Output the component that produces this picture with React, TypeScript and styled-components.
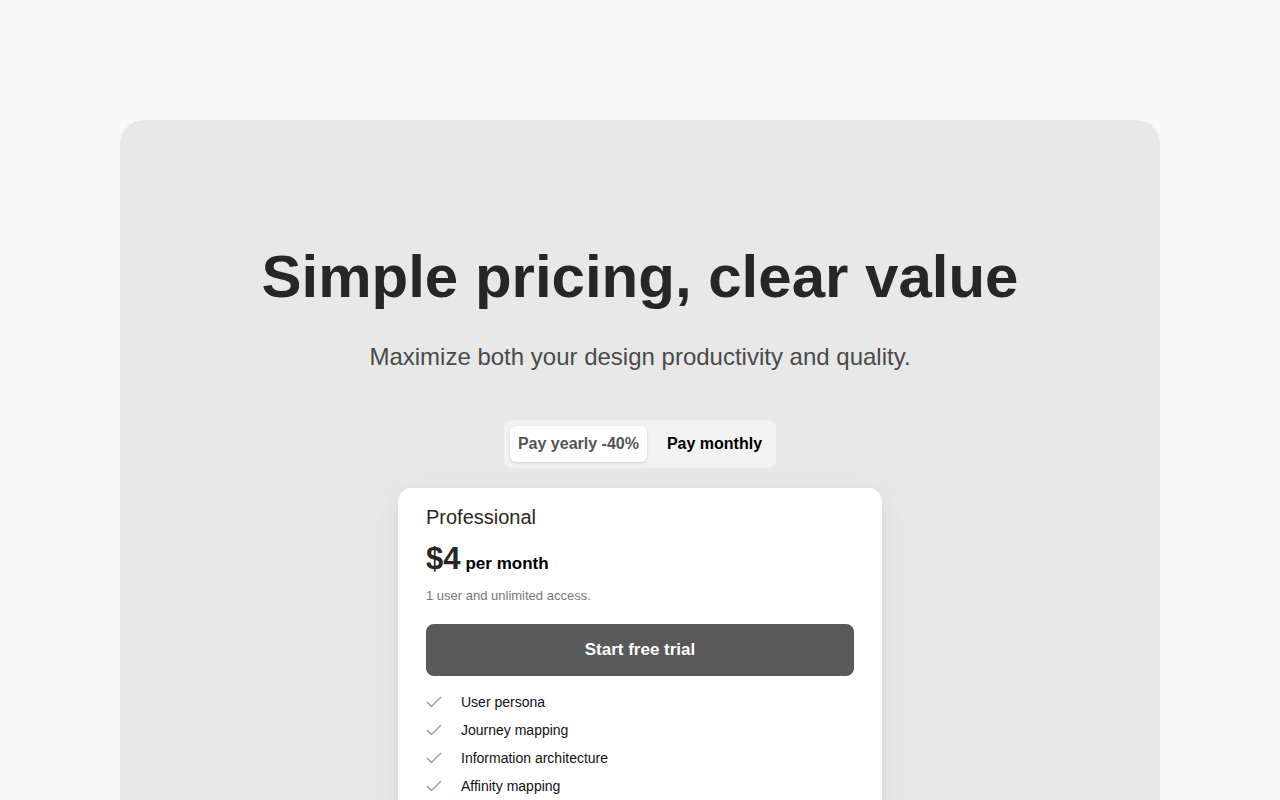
import React, { useState } from 'react';
import styled, { createGlobalStyle } from 'styled-components';

const GlobalStyle = createGlobalStyle`
  html, body {
    margin: 0;
    padding: 0;
    background: #f8f8f8;
    font-family: "Liberation Sans", Arial, Helvetica, sans-serif;
    overflow: hidden;
  }
`;

const Page = styled.div`
  height: 800px;
  padding: 120px 120px 0;
  box-sizing: border-box;
`;

const Panel = styled.section`
  background: #e8e8e8;
  border-radius: 24px;
  height: 760px;
  display: flex;
  flex-direction: column;
  align-items: center;
  padding-top: 122px;
  box-sizing: border-box;
`;

const Title = styled.h1`
  margin: 0;
  font-size: 60px;
  line-height: 70px;
  font-weight: 700;
  color: #262626;
`;

const Subtitle = styled.p`
  margin: 30px 0 0;
  font-size: 24px;
  line-height: 30px;
  color: #4a4a4a;
`;

const Toggle = styled.div`
  margin-top: 48px;
  display: flex;
  gap: 12px;
  padding: 6px;
  background: #f2f2f2;
  border-radius: 8px;
`;

const ToggleButton = styled.button<{ $active: boolean }>`
  border: none;
  font-family: inherit;
  font-size: 16px;
  font-weight: 700;
  height: 36px;
  padding: 0 8px;
  border-radius: 6px;
  cursor: pointer;
  color: ${({ $active }) => ($active ? '#555555' : '#000000')};
  background: ${({ $active }) => ($active ? '#ffffff' : 'transparent')};
  box-shadow: ${({ $active }) => ($active ? '0 1px 3px rgba(0,0,0,0.15)' : 'none')};
`;

const Card = styled.div`
  margin-top: 20px;
  width: 484px;
  box-sizing: border-box;
  background: #ffffff;
  border-radius: 14px;
  padding: 17px 28px 40px;
  box-shadow: 0 6px 24px rgba(0, 0, 0, 0.08);
`;

const PlanName = styled.div`
  font-size: 20px;
  line-height: 24px;
  color: #262626;
`;

const PriceRow = styled.div`
  margin-top: 12px;
  display: flex;
  align-items: baseline;
  gap: 5px;
`;

const Price = styled.span`
  font-size: 31px;
  font-weight: 700;
  color: #262626;
`;

const Period = styled.span`
  font-size: 17px;
  font-weight: 700;
  color: #000;
`;

const Note = styled.div`
  margin-top: 11px;
  font-size: 13px;
  color: #777777;
`;

const CtaButton = styled.button`
  margin-top: 21px;
  width: 100%;
  height: 52px;
  border: none;
  border-radius: 8px;
  background: #595959;
  color: #ffffff;
  font-family: inherit;
  font-size: 17px;
  font-weight: 700;
  cursor: pointer;
`;

const Features = styled.ul`
  list-style: none;
  margin: 16px 0 0;
  padding: 0;
  display: flex;
  flex-direction: column;
  gap: 8px;
`;

const Feature = styled.li`
  display: flex;
  align-items: center;
  gap: 19px;
  font-size: 14px;
  line-height: 20px;
  color: #111;
`;

const Check = () => (
  <svg width="16" height="12" viewBox="0 0 16 12" fill="none">
    <polyline points="1,6 5.5,10.5 15,1" stroke="#9a9a9a" strokeWidth="1.4" />
  </svg>
);

const features = ['User persona', 'Journey mapping', 'Information architecture', 'Affinity mapping'];

export default function App() {
  const [yearly, setYearly] = useState(true);
  return (
    <>
      <GlobalStyle />
      <Page>
        <Panel>
          <Title>Simple pricing, clear value</Title>
          <Subtitle>Maximize both your design productivity and quality.</Subtitle>
          <Toggle>
            <ToggleButton $active={yearly} onClick={() => setYearly(true)}>Pay yearly -40%</ToggleButton>
            <ToggleButton $active={!yearly} onClick={() => setYearly(false)}>Pay monthly</ToggleButton>
          </Toggle>
          <Card>
            <PlanName>Professional</PlanName>
            <PriceRow>
              <Price>$4</Price>
              <Period>per month</Period>
            </PriceRow>
            <Note>1 user and unlimited access.</Note>
            <CtaButton>Start free trial</CtaButton>
            <Features>
              {features.map((f) => (
                <Feature key={f}>
                  <Check />
                  {f}
                </Feature>
              ))}
            </Features>
          </Card>
        </Panel>
      </Page>
    </>
  );
}
